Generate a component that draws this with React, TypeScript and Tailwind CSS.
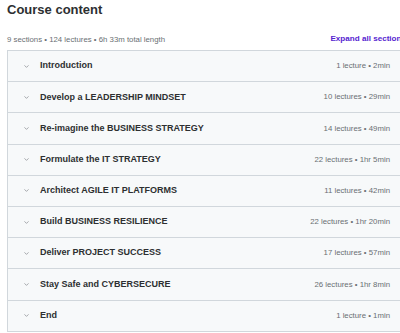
import { ChevronDown } from "lucide-react";

const sections = [
  { title: "Introduction", meta: "1 lecture • 2min" },
  { title: "Develop a LEADERSHIP MINDSET", meta: "10 lectures • 29min" },
  { title: "Re-imagine the BUSINESS STRATEGY", meta: "14 lectures • 49min" },
  { title: "Formulate the IT STRATEGY", meta: "22 lectures • 1hr 5min" },
  { title: "Architect AGILE IT PLATFORMS", meta: "11 lectures • 42min" },
  { title: "Build BUSINESS RESILIENCE", meta: "22 lectures • 1hr 20min" },
  { title: "Deliver PROJECT SUCCESS", meta: "17 lectures • 57min" },
  { title: "Stay Safe and CYBERSECURE", meta: "26 lectures • 1hr 8min" },
  { title: "End", meta: "1 lecture • 1min" },
];

export default function App() {
  return (
    <div
      className="w-[400px] h-[333px] overflow-hidden bg-white pl-[7px] text-[#2d2f31]"
      style={{ fontFamily: "'Liberation Sans', Arial, sans-serif" }}
    >
      <h2 className="text-[13px] font-bold leading-[18px] pt-[1px]">Course content</h2>

      <div className="mt-[14px] flex w-[399px] items-center justify-between h-[13px]">
        <span className="text-[7.8px] text-[#6a6f73] whitespace-nowrap">
          9 sections • 124 lectures • 6h 33m total length
        </span>
        <span className="text-[8.1px] font-bold text-[#5624d0] whitespace-nowrap">
          Expand all sections
        </span>
      </div>

      {/* Curriculum */}
      <div className="mt-[4px] w-[400px] border border-[#d1d7dc] border-b-0">
        {sections.map((s) => (
          <div
            key={s.title}
            className="flex h-[31.2px] items-center justify-between border-b border-[#d1d7dc] bg-[#f7f9fa] pl-[15px] pr-[16px]"
          >
            <div className="flex items-center gap-[10px]">
              <ChevronDown size={7} strokeWidth={2} className="text-[#6a6f73]" />
              <span className="text-[9px] font-bold">{s.title}</span>
            </div>
            <span className="text-[7.8px] text-[#6a6f73]">{s.meta}</span>
          </div>
        ))}
      </div>
    </div>
  );
}
